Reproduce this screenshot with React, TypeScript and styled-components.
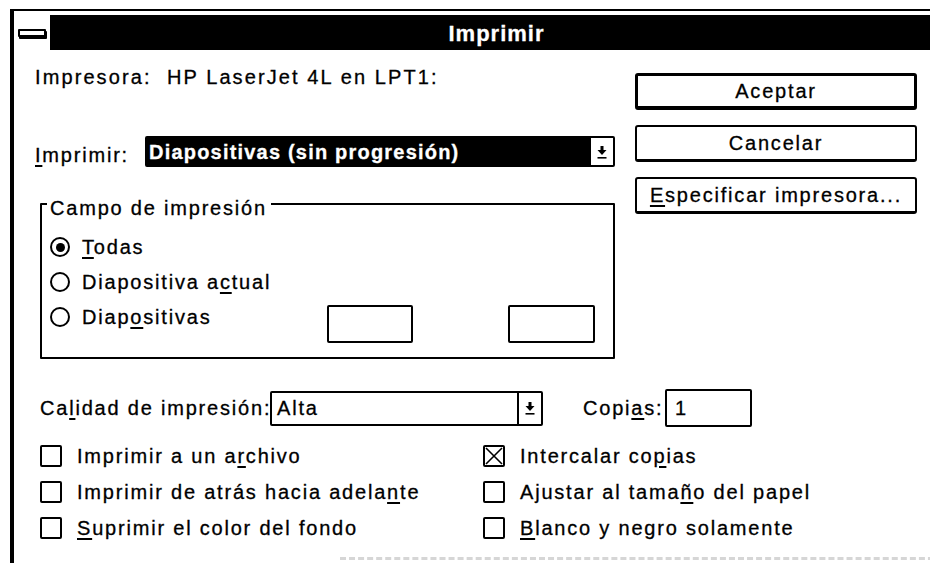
import styled, { createGlobalStyle } from "styled-components";

const GlobalStyle = createGlobalStyle`
  html, body {
    margin: 0;
    padding: 0;
    background: #fff;
    overflow: hidden;
  }
  body {
    font-family: "Liberation Sans", Arial, sans-serif;
    font-size: 20px;
    line-height: 24px;
    letter-spacing: 1.8px;
    color: #000;
    -webkit-text-stroke: 0.3px #000;
  }
`;

const Window = styled.div`
  margin: 9px 0 0 10px;
  width: 933px;
  height: 560px;
  border-top: 2px solid #000;
  border-left: 4px solid #000;
  padding-top: 4px;
  box-sizing: border-box;
`;

const TitleBar = styled.div`
  display: flex;
  height: 35px;
`;

const SysBox = styled.div`
  width: 36px;
  display: flex;
  align-items: center;
  justify-content: center;
  background: #fff;
`;

const SysIcon = styled.span`
  width: 24px;
  height: 4px;
  border: 2px solid #000;
  border-radius: 1px;
  background: #fff;
  box-shadow: 1px 2px 0 #000;
`;

const Caption = styled.div`
  flex: 1;
  background: #000;
  color: #fff;
  -webkit-text-stroke: 0.3px #fff;
  display: flex;
  align-items: center;
  justify-content: center;
  padding-top: 3px;
  box-sizing: border-box;
  font-weight: bold;
  font-size: 22px;
  letter-spacing: 1px;
`;

const Content = styled.div`
  padding-left: 21px;
`;

const TopArea = styled.div`
  display: grid;
  grid-template-columns: 580px 282px;
  column-gap: 20px;
`;

const LeftCol = styled.div`
  display: flex;
  flex-direction: column;
`;

const PrinterLine = styled.div`
  margin-top: 15px;
  white-space: pre;
  letter-spacing: 2.1px;
`;

const FieldRow = styled.div<{ $top: number; $align?: string; $height?: number }>`
  display: flex;
  align-items: ${(p) => p.$align || "center"};
  margin-top: ${(p) => p.$top}px;
  height: ${(p) => (p.$height ? `${p.$height}px` : "auto")};
`;

const FieldLabel = styled.span<{ $w: number; $ml?: number }>`
  flex: none;
  width: ${(p) => p.$w}px;
  margin-left: ${(p) => p.$ml || 0}px;
  white-space: nowrap;
`;

const Combo = styled.div<{ $w?: number; $h: number }>`
  display: flex;
  flex: ${(p) => (p.$w ? "none" : "1")};
  width: ${(p) => (p.$w ? `${p.$w}px` : "auto")};
  height: ${(p) => p.$h}px;
  border: 2px solid #000;
  border-radius: 2px;
  box-sizing: border-box;
`;

const ComboValue = styled.div<{ $selected?: boolean }>`
  flex: 1;
  display: flex;
  align-items: center;
  padding-left: ${(p) => (p.$selected ? 2 : 5)}px;
  background: ${(p) => (p.$selected ? "#000" : "#fff")};
  color: ${(p) => (p.$selected ? "#fff" : "#000")};
  -webkit-text-stroke: 0.3px ${(p) => (p.$selected ? "#fff" : "#000")};
  font-weight: ${(p) => (p.$selected ? "bold" : "normal")};
  letter-spacing: ${(p) => (p.$selected ? "1.2px" : "1.8px")};
  white-space: nowrap;
`;

const ComboArrow = styled.div`
  width: 22px;
  border-left: 2px solid #000;
  display: flex;
  align-items: center;
  justify-content: center;
  background: #fff;
`;

const GroupBox = styled.div`
  position: relative;
  margin: 36px 0 0 5px;
  height: 156px;
  border: 2px solid #000;
  border-radius: 1px;
  box-sizing: border-box;
  padding: 30px 0 0 8px;
  display: flex;
  flex-direction: column;
  gap: 11px;
`;

const Legend = styled.span`
  position: absolute;
  top: -9px;
  left: 5px;
  padding: 0 4px 0 3px;
  background: #fff;
  white-space: nowrap;
`;

const RadioRow = styled.div`
  display: flex;
  align-items: flex-start;
`;

const RadioCircle = styled.span`
  flex: none;
  width: 20px;
  height: 20px;
  margin-top: 2px;
  border: 2px solid #000;
  border-radius: 50%;
  box-sizing: border-box;
  display: flex;
  align-items: center;
  justify-content: center;
`;

const RadioDot = styled.span`
  width: 9px;
  height: 9px;
  border-radius: 50%;
  background: #000;
`;

const RadioLabel = styled.span<{ $w?: number }>`
  margin-left: 12px;
  width: ${(p) => (p.$w ? `${p.$w}px` : "auto")};
  flex: none;
  white-space: nowrap;
`;

const TextBox = styled.div<{ $w: number; $ml?: number }>`
  flex: none;
  width: ${(p) => p.$w}px;
  height: 38px;
  margin-left: ${(p) => p.$ml || 0}px;
  border: 2px solid #000;
  border-radius: 2px;
  box-sizing: border-box;
  display: flex;
  align-items: center;
  padding-left: 8px;
`;

const ButtonCol = styled.div`
  display: flex;
  flex-direction: column;
  gap: 15px;
  padding-top: 23px;
`;

const Button = styled.button<{ $default?: boolean }>`
  height: 37px;
  background: #fff;
  color: #000;
  font: inherit;
  letter-spacing: inherit;
  border: ${(p) => (p.$default ? 3 : 2)}px solid #000;
  border-bottom-width: ${(p) => (p.$default ? 4 : 3)}px;
  border-radius: 3px;
  padding: 0;
  white-space: nowrap;
`;

const Key = styled.span`
  text-decoration: underline;
  text-decoration-thickness: 2px;
  text-underline-offset: 3px;
`;

const CheckGrid = styled.div`
  display: grid;
  grid-template-columns: 443px 1fr;
  row-gap: 12px;
  margin-top: 17px;
  padding-left: 5px;
`;

const CheckRow = styled.div`
  display: flex;
  align-items: center;
  gap: 15px;
  height: 24px;
  white-space: nowrap;
`;

const CheckBox = styled.span`
  flex: none;
  width: 22px;
  height: 22px;
  border: 2px solid #000;
  border-radius: 2px;
  box-sizing: border-box;
  display: flex;
  align-items: center;
  justify-content: center;
`;

const BottomEdge = styled.div`
  margin: 17px 0 0 305px;
  border-top: 3px dashed #d6d6d6;
`;

function DownArrow() {
  return (
    <svg width="10" height="14" viewBox="0 0 10 14">
      <rect x="3.5" y="1" width="3" height="4" fill="#000" />
      <polygon points="0.5,5 9.5,5 5,10" fill="#000" />
      <rect x="0.5" y="12" width="9" height="1.6" fill="#000" />
    </svg>
  );
}

function Check({ checked, children }: { checked?: boolean; children: React.ReactNode }) {
  return (
    <CheckRow>
      <CheckBox>
        {checked && (
          <svg width="18" height="18" viewBox="0 0 18 18">
            <path d="M1 1 L17 17 M17 1 L1 17" stroke="#000" strokeWidth="1.6" />
          </svg>
        )}
      </CheckBox>
      <span>{children}</span>
    </CheckRow>
  );
}

function Radio({ checked, w, children }: { checked?: boolean; w?: number; children: React.ReactNode }) {
  return (
    <>
      <RadioCircle>{checked && <RadioDot />}</RadioCircle>
      <RadioLabel $w={w}>{children}</RadioLabel>
    </>
  );
}

export default function App() {
  return (
    <>
      <GlobalStyle />
      <Window>
        <TitleBar>
          <SysBox>
            <SysIcon />
          </SysBox>
          <Caption>Imprimir</Caption>
        </TitleBar>
        <Content>
          <TopArea>
            <LeftCol>
              <PrinterLine>Impresora:  HP LaserJet 4L en LPT1:</PrinterLine>
              <FieldRow $top={47} $align="flex-end">
                <FieldLabel $w={110}>
                  <Key>I</Key>mprimir:
                </FieldLabel>
                <Combo $h={31}>
                  <ComboValue $selected>Diapositivas (sin progresión)</ComboValue>
                  <ComboArrow>
                    <DownArrow />
                  </ComboArrow>
                </Combo>
              </FieldRow>
              <GroupBox>
                <Legend>Campo de impresión</Legend>
                <RadioRow>
                  <Radio checked>
                    <Key>T</Key>odas
                  </Radio>
                </RadioRow>
                <RadioRow>
                  <Radio>
                    Diapositiva a<Key>c</Key>tual
                  </Radio>
                </RadioRow>
                <RadioRow>
                  <Radio w={245}>
                    Diap<Key>o</Key>sitivas
                  </Radio>
                  <TextBox $w={86} />
                  <TextBox $w={87} $ml={95} />
                </RadioRow>
              </GroupBox>
            </LeftCol>
            <ButtonCol>
              <Button $default>Aceptar</Button>
              <Button>Cancelar</Button>
              <Button>
                <Key>E</Key>specificar impresora...
              </Button>
            </ButtonCol>
          </TopArea>

          <FieldRow $top={30} $height={38}>
            <FieldLabel $w={230} $ml={5}>
              Ca<Key>l</Key>idad de impresión:
            </FieldLabel>
            <Combo $w={273} $h={35}>
              <ComboValue>Alta</ComboValue>
              <ComboArrow>
                <DownArrow />
              </ComboArrow>
            </Combo>
            <FieldLabel $w={82} $ml={40}>
              Copi<Key>a</Key>s:
            </FieldLabel>
            <TextBox $w={87}>1</TextBox>
          </FieldRow>

          <CheckGrid>
            <Check>
              Imprimir a un a<Key>r</Key>chivo
            </Check>
            <Check checked>
              Intercalar co<Key>p</Key>ias
            </Check>
            <Check>
              Imprimir de atrás hacia adela<Key>n</Key>te
            </Check>
            <Check>
              Ajustar al tama<Key>ñ</Key>o del papel
            </Check>
            <Check>
              <Key>S</Key>uprimir el color del fondo
            </Check>
            <Check>
              <Key>B</Key>lanco y negro solamente
            </Check>
          </CheckGrid>
          <BottomEdge />
        </Content>
      </Window>
    </>
  );
}
